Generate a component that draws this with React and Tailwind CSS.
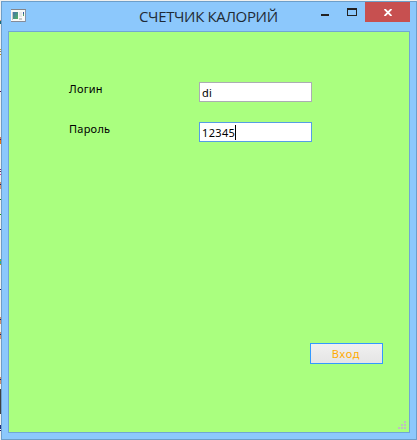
const specks = [
  'top-[20px] h-[1px] bg-[#d09070]',
  'top-[21px] h-[3px] bg-[#146b78]',
  'top-[49px] h-[1px] bg-[#c8a020]',
  'top-[51px] h-[1px] bg-[#9a8050]',
  'top-[54px] h-[1px] bg-[#c09010]',
  'top-[91px] h-[1px] bg-[#501060]',
  'top-[137px] h-[2px] bg-[#d08060]',
  'top-[139px] h-[1px] bg-[#701040]',
  'top-[140px] h-[4px] bg-[#e87818]',
  'top-[169px] h-[1px] bg-[#802080]',
  'top-[171px] h-[1px] bg-[#602060]',
  'top-[174px] h-[1px] bg-[#d030a0]',
  'top-[182px] h-[7px] bg-[#d09070]',
  'top-[184px] h-[1px] bg-[#202060]',
  'top-[199px] h-[1px] bg-[#108010]',
  'top-[214px] h-[1px] bg-[#10a010]',
  'top-[229px] h-[1px] bg-[#181070]',
  'top-[259px] h-[6px] bg-[#20b0a0]',
  'top-[260px] h-[1px] bg-[#b0a010]',
  'top-[264px] h-[1px] bg-[#c0a010]',
  'top-[289px] h-[1px] bg-[#181070]',
  'top-[317px] h-[7px] bg-[#d09070]',
  'top-[319px] h-[1px] bg-[#202060]',
  'top-[332px] h-[7px] bg-[#d09070]',
  'top-[334px] h-[1px] bg-[#202060]',
  'top-[377px] h-[7px] bg-[#d09070]',
  'top-[379px] h-[1px] bg-[#202060]',
  'top-[389px] h-[25px] bg-[#404040]',
  'top-[425px] h-[4px] bg-[#203080]',
  'top-[430px] h-[1px] bg-[#181070]',
];

function AppIcon() {
  return (
    <svg width="16" height="14" viewBox="0 0 16 14" shapeRendering="crispEdges" className="mt-[7px] ml-[9px] shrink-0">
      <defs>
        <linearGradient id="pane" x1="0" y1="0" x2="1" y2="1">
          <stop offset="0" stopColor="#4471ad" />
          <stop offset="1" stopColor="#50b360" />
        </linearGradient>
      </defs>
      <rect width="15" height="13" fill="#f8f9f8" />
      <rect width="15" height="1" fill="#84868b" />
      <rect y="12" width="15" height="1" fill="#858b98" />
      <rect x="14" y="1" width="1" height="12" fill="#8794a8" />
      <rect x="1" y="3" width="1" height="8" fill="#c7c7c7" />
      <rect x="2" y="3" width="5" height="7" fill="url(#pane)" />
      <rect x="8" y="3" width="3" height="5" fill="#e8e8e8" />
      <rect x="8" y="9" width="3" height="2" fill="#c9c9c9" />
      <rect x="12" y="3" width="1" height="2" fill="#355a9b" />
      <rect x="12" y="5" width="1" height="2" fill="#4f9e68" />
    </svg>
  );
}

function TitleBar() {
  return (
    <div className="flex h-[29px] shrink-0 items-start">
      <AppIcon />
      <h1 className="ml-[112px] w-[145px] whitespace-nowrap font-['Open_Sans','Noto_Sans',sans-serif] text-[15px] leading-[28px] tracking-[-0.35px] text-[#1f2a35]">
        СЧЕТЧИК КАЛОРИЙ
      </h1>
      <div className="ml-auto flex h-5">
        <button className="flex w-[27px] justify-center pt-3" aria-label="Свернуть">
          <span className="h-[2px] w-2 bg-[#222]" />
        </button>
        <button className="flex w-[27px] justify-center pt-[6px]" aria-label="Развернуть">
          <span className="h-2 w-[10px] border border-t-2 border-[#222]" />
        </button>
        <button className="mr-[6px] flex w-[45px] items-center justify-center bg-[#c75050]" aria-label="Закрыть">
          <svg width="8" height="7" viewBox="0 0 8 7" stroke="#fff" strokeWidth="1.9">
            <path d="M0.5 0 7.5 7M7.5 0 0.5 7" />
          </svg>
        </button>
      </div>
    </div>
  );
}

function Field({ label, value, focused }) {
  return (
    <label className="flex h-5 w-[243px]">
      <span className="w-[130px] font-['Noto_Sans',sans-serif] text-[11px] leading-[14px] tracking-[0.25px]">{label}</span>
      <span
        className={
          focused
            ? 'flex w-[113px] items-center border border-[#569de5] bg-white pl-[2px]'
            : 'flex w-[113px] items-center border border-[#abadb3] bg-white pl-[2px]'
        }
      >
        <span className="pt-[2px] font-['Noto_Sans',sans-serif] text-[11px] leading-4 tracking-[0.35px]">{value}</span>
        {focused && <span className="h-[15px] w-px bg-black" />}
      </span>
    </label>
  );
}

function SizeGrip() {
  return (
    <svg width="9" height="9" viewBox="0 0 9 9" fill="#bfbfbf" shapeRendering="crispEdges" className="mt-[57px] mr-[2px] ml-auto">
      <path d="M6 0h2v2h-2zM3 3h2v2h-2zM6 3h2v2h-2zM0 6h2v2h-2zM3 6h2v2h-2zM6 6h2v2h-2z" />
    </svg>
  );
}

export default function App() {
  return (
    <div className="relative h-[440px] w-[417px] overflow-hidden bg-[#f0f0ee] pt-px pl-px text-black">
      {specks.map((s) => (
        <span key={s} className={`absolute left-0 w-px ${s}`} />
      ))}
      <div className="flex h-[439px] w-[416px] flex-col border border-[#6d9ec9] bg-[#8cc8fc]">
        <TitleBar />
        <main className="ml-[6px] flex h-[402px] w-[402px] flex-col border border-[#70a7d3] bg-[#aaff7f]">
          <form className="mt-[50px] ml-[60px] flex flex-col gap-5">
            <Field label="Логин" value="di" />
            <Field label="Пароль" value="12345" focused />
          </form>
          <button
            type="button"
            className="mt-[201px] ml-[301px] h-[21px] w-[73px] border border-[#3399ff] bg-linear-to-b from-[#f0f0f0] to-[#e5e5e5] pr-px font-['Noto_Sans',sans-serif] text-[11px] leading-[19px] tracking-[0.7px] text-[#ffaa00]"
          >
            Вход
          </button>
          <SizeGrip />
        </main>
      </div>
    </div>
  );
}
